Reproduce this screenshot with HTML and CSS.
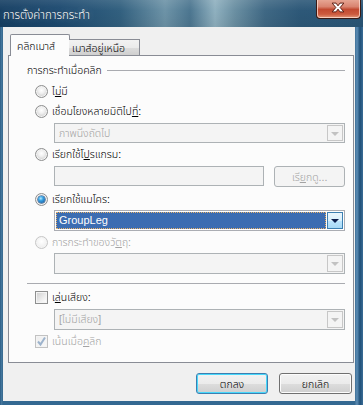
FILE: index.html
```html
<!DOCTYPE html>
<html lang="th">
<head>
<meta charset="utf-8">
<title>การตั้งค่าการกระทำ</title>
<link rel="stylesheet" href="styles.css">
</head>
<body>
<div class="window">
  <div class="titlebar">
    <span class="title">การตั้งค่าการกระทำ</span>
    <div class="close">
      <svg width="45" height="19" viewBox="0 0 45 19">
        <path d="M16.5 5 L20.5 5 L22.5 7.8 L24.5 5 L28.5 5 L24.7 9.5 L28.5 14 L24.5 14 L22.5 11.2 L20.5 14 L16.5 14 L20.3 9.5 Z" fill="#fff" stroke="#5a1c10" stroke-width="1" stroke-linejoin="round"/>
      </svg>
    </div>
  </div>
  <div class="client">
    <div class="tabs">
      <div class="tab active">คลิกเมาส์</div>
      <div class="tab">เมาส์อยู่เหนือ</div>
    </div>
    <div class="panel">
      <div class="group-head"><span>การกระทำเมื่อคลิก</span><i class="rule"></i></div>

      <div class="opt r1"><span class="radio"></span><span class="lbl">ไ<u>ม่</u>มี</span></div>
      <div class="opt r2"><span class="radio"></span><span class="lbl">เชื่อมโยงหลายมิติไป<u>ที่</u>:</span></div>
      <div class="select disabled s1"><span class="val">ภาพนิ่งถัดไป</span><span class="drop"><i class="arrow"></i></span></div>

      <div class="opt r3"><span class="radio"></span><span class="lbl">เรียกใช้โ<u>ป</u>รแกรม:</span></div>
      <div class="prog-row">
        <div class="textbox"></div>
        <div class="btn disabled-btn">เรี<u>ย</u>กดู...</div>
      </div>

      <div class="opt r4"><span class="radio checked"></span><span class="lbl">เรียกใช้แมโคร:</span></div>
      <div class="select active-sel s2"><span class="val">GroupLeg</span><span class="drop"><i class="arrow"></i></span></div>

      <div class="opt r5 dim"><span class="radio dis"></span><span class="lbl">การกระทำของวั<u>ต</u>ถุ:</span></div>
      <div class="select disabled s3"><span class="val"></span><span class="drop"><i class="arrow"></i></span></div>

      <div class="sep"></div>

      <div class="opt c1"><span class="check"></span><span class="lbl">เ<u>ล่</u>นเสียง:</span></div>
      <div class="select disabled s4"><span class="val">[ไม่มีเสียง]</span><span class="drop"><i class="arrow"></i></span></div>
      <div class="opt c2 dim"><span class="check checked-dis">
        <svg width="11" height="11" viewBox="0 0 11 11"><path d="M2 5.5 L4.5 8.5 L9 1.5" fill="none" stroke="#9db3cc" stroke-width="2"/></svg>
      </span><span class="lbl">เน้นเมื่อ<u>ค</u>ลิก</span></div>
    </div>
    <div class="buttons">
      <div class="btn ok">ตกลง</div>
      <div class="btn cancel">ยกเลิก</div>
    </div>
  </div>
</div>
</body>
</html>
```

FILE: styles.css
```css
* { box-sizing: border-box; }
html, body { margin: 0; padding: 0; }
body {
  width: 363px;
  height: 405px;
  overflow: hidden;
  font-family: "Liberation Sans", Tahoma, "Noto Sans Thai", sans-serif;
  font-size: 10.5px;
  font-weight: 300;
  color: #000;
}
u { text-decoration: underline; text-underline-offset: 1px; }

.window {
  width: 363px;
  height: 405px;
  display: flex;
  flex-direction: column;
  background:
    linear-gradient(90deg, #2c5c84 0px, #4a7ea4 2px, #2a5a80 3px, transparent 3px, transparent 355px, #3e6f96 355px, #5b8cb4 357px, #1f4f78 360px, #3a6d96 363px),
    linear-gradient(180deg, #2c5d83 0, #336891 100%);
}

.titlebar {
  height: 27px;
  flex: none;
  display: flex;
  align-items: flex-start;
  background:
    linear-gradient(180deg, rgba(255,255,255,0.10) 0, rgba(255,255,255,0) 40%, rgba(0,0,0,0.05) 100%),
    linear-gradient(90deg, #163f63 0, #1d4a70 60px, #32607f 120px, #6d93a7 165px, #4c7690 190px, #8fb0bf 215px, #6a8fa2 235px, #3f6884 265px, #2d5878 300px, #2a5677 363px);
}
.title {
  margin: 8px 0 0 3px;
  color: #fff;
  font-size: 11.5px;
  line-height: 14px;
  text-shadow: 0 0 6px rgba(255,255,255,0.45), 0 0 2px rgba(0,0,0,0.4);
}
.close {
  margin-left: auto;
  margin-right: 2px;
  width: 45px;
  height: 20px;
  margin-top: -1px;
  border: 1px solid #3b1a14;
  border-top: none;
  border-radius: 0 0 4px 4px;
  box-shadow: inset 0 0 0 1px rgba(255,225,215,0.75);
  background: linear-gradient(180deg, #e8aa98 0, #d98470 40%, #c24a31 55%, #cc5a3e 80%, #e29a7c 100%);
  display: flex;
}
.close svg { display: block; margin: -1px 0 0 -1px; }

.client {
  flex: 1;
  margin: 0 8px 4px 3px;
  background: #f0f0f0;
  padding: 7px 2px 0 5px;
}

.tabs {
  height: 21px;
  display: flex;
  align-items: flex-end;
  padding-left: 2px;
  position: relative;
  z-index: 2;
}
.tab {
  border: 1px solid #898c95;
  border-bottom: none;
  line-height: 14px;
  white-space: nowrap;
}
.tab.active {
  width: 60px;
  height: 22px;
  margin-bottom: -1px;
  background: #fcfcfc;
  padding: 4px 0 0 6px;
  border-radius: 2px 2px 0 0;
}
.tab:not(.active) {
  width: 71px;
  height: 16px;
  margin-left: -1px;
  background: linear-gradient(180deg, #f2f2f2 0, #ebebeb 50%, #dddddd 51%, #cfcfcf 100%);
  padding: 1px 0 0 3px;
  border-left: none;
}

.panel {
  width: 346px;
  height: 308px;
  background: #fcfcfc;
  border: 1px solid #898c95;
  padding: 0 8px 0 9px;
  position: relative;
  z-index: 1;
}

.group-head {
  margin: 7px 0 0 9px;
  height: 14px;
  display: flex;
  align-items: center;
  line-height: 14px;
}
.group-head .rule {
  flex: 1;
  height: 1px;
  background: #a9abb0;
  margin-left: 5px;
  margin-top: 1px;
}

.opt {
  height: 16px;
  display: flex;
  align-items: center;
  margin-left: 17px;
  line-height: 16px;
  white-space: nowrap;
}
.opt .lbl { margin-left: 4px; }
.r1 { margin-top: 6px; }
.r2 { margin-top: 4px; }
.r3 { margin-top: 3px; }
.r4 { margin-top: 4px; }
.r5 { margin-top: 3px; }
.c1 { margin-top: 5px; }
.c2 { margin-top: 3px; }
.dim { color: #a3a3a3; }

.radio {
  width: 13px;
  height: 13px;
  border-radius: 50%;
  border: 1px solid #8e8f8f;
  background: radial-gradient(circle at 50% 40%, #ffffff 0, #f0f0f0 35%, #cfcfcf 75%, #e8e8e8 100%);
  box-shadow: inset 0 0 0 1px #f4f4f4;
  position: relative;
  flex: none;
}
.radio.checked::after {
  content: "";
  position: absolute;
  left: 2px;
  top: 2px;
  width: 7px;
  height: 7px;
  border-radius: 50%;
  background: radial-gradient(circle at 40% 35%, #b8ecff 0, #3aa2e3 35%, #0f4c91 100%);
  box-shadow: 0 0 0 0.5px #0a3d78;
}
.radio.dis {
  border-color: #c6c6c6;
  background: radial-gradient(circle at 50% 40%, #ffffff 0, #f4f4f4 50%, #e4e4e4 100%);
}

.check {
  width: 13px;
  height: 13px;
  border: 1px solid #8e8f8f;
  background: linear-gradient(135deg, #cdcdcd 0, #eeeeee 60%, #ffffff 100%);
  box-shadow: inset 0 0 0 1px #f4f4f4;
  flex: none;
  display: flex;
  align-items: center;
  justify-content: center;
}
.check.checked-dis {
  border-color: #c2c2c2;
  background: linear-gradient(135deg, #eeeeee 0, #f8f8f8 100%);
}
.check svg { display: block; }

.select {
  margin-left: 36px;
  height: 21px;
  border: 1px solid #adb2b5;
  display: flex;
  align-items: stretch;
  padding: 1px;
  line-height: 17px;
}
.select .val { flex: 1; padding-left: 3px; white-space: nowrap; }
.select .drop {
  width: 16px;
  flex: none;
  display: flex;
  align-items: center;
  justify-content: center;
  border: 1px solid #c7c7c7;
}
.arrow {
  width: 0; height: 0;
  border-left: 4px solid transparent;
  border-right: 4px solid transparent;
  border-top: 4px solid #c2c2c2;
  margin-top: 1px;
}
.select.disabled { background: #f4f4f4; color: #a3a3a3; }
.s1 { margin-top: 4px; height: 20px; line-height: 16px; }
.s2 { margin-top: 3px; }
.s3 { margin-top: 3px; }
.s4 { margin-top: 4px; }

.select.active-sel {
  background: #fff;
  border-color: #abadb3;
}
.select.active-sel .val {
  background: #3c6db2;
  color: #fff;
  font-size: 11px;
  outline: 1px dotted #e9b36a;
  outline-offset: -1px;
  margin-right: 1px;
}
.select.active-sel .drop {
  border-color: #3c7fb1;
  background: linear-gradient(180deg, #eaf6fd 0, #d9f0fc 50%, #bee6fd 51%, #a7d9f5 100%);
}
.select.active-sel .arrow { border-top-color: #0b1d4c; }

.prog-row {
  margin: 4px 0 0 36px;
  display: flex;
  align-items: flex-start;
  height: 21px;
}
.textbox {
  width: 217px;
  height: 20px;
  border: 1px solid #adb2b5;
  background: #f4f4f4;
}
.btn {
  height: 21px;
  border: 1px solid #707070;
  border-radius: 3px;
  display: flex;
  align-items: center;
  justify-content: center;
  line-height: 14px;
  background: linear-gradient(180deg, #f2f2f2 0, #ebebeb 50%, #dddddd 51%, #cfcfcf 100%);
  box-shadow: inset 0 0 0 1px #fcfcfc;
}
.btn.disabled-btn {
  margin-left: 10px;
  width: 73px;
  background: #f4f4f4;
  border-color: #adb2b5;
  color: #a3a3a3;
  box-shadow: none;
}

.sep {
  margin: 9px 0 0 9px;
  height: 1px;
  background: #a9abb0;
}

.buttons {
  margin-top: 10px;
  display: flex;
  justify-content: flex-end;
  padding-right: 1px;
  gap: 11px;
}
.btn.ok {
  width: 72px;
  border-color: #3c7fb1;
  box-shadow: inset 0 0 0 1px #48d8fb;
}
.btn.cancel { width: 73px; }
```
